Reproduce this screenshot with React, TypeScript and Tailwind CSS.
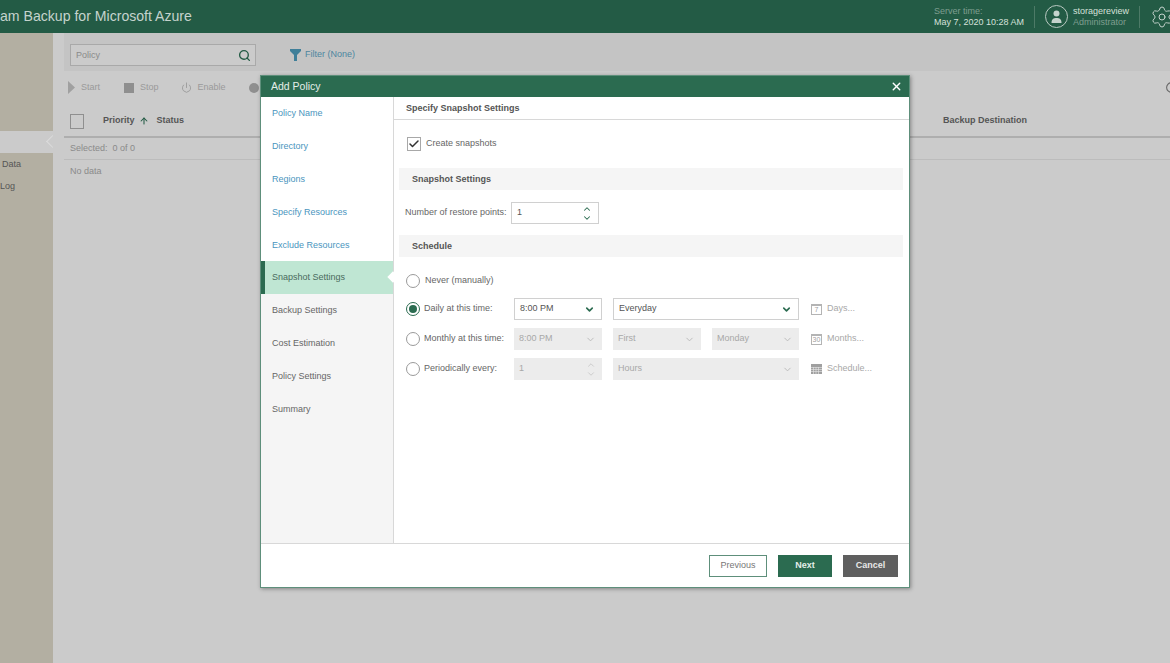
import React from "react";
import { Search, Power, Check, ChevronDown, ChevronUp, X, Settings, ArrowUp, RotateCw } from "lucide-react";

const navItems = ["Policy Name", "Directory", "Regions", "Specify Resources", "Exclude Resources", "Snapshot Settings", "Backup Settings", "Cost Estimation", "Policy Settings", "Summary"];

function Radio({ on }: { on?: boolean }) {
  return (
    <span className={`flex h-[14px] w-[14px] shrink-0 items-center justify-center rounded-full border bg-white ${on ? "border-[#2b6b50]" : "border-[#9a9a9a]"}`}>
      {on && <span className="h-[8px] w-[8px] rounded-full bg-[#2b6b50]" />}
    </span>
  );
}

function Sel({ w, text, off, spin }: { w: string; text: string; off?: boolean; spin?: boolean }) {
  return (
    <div className={`flex h-[22px] items-center justify-between pl-[5px] pr-[6px] ${w} ${off ? "bg-[#ececec] text-[#a8a8a8]" : "border border-[#d0d0d0] bg-white text-[#555]"}`}>
      <span>{text}</span>
      {spin ? (
        <span className={`flex flex-col ${off ? "text-[#b8b8b8]" : "text-[#2b6b50]"}`}>
          <ChevronUp size={10} strokeWidth={off ? 1.5 : 2.5} className="-mb-[1px]" />
          <ChevronDown size={10} strokeWidth={off ? 1.5 : 2.5} />
        </span>
      ) : (
        <ChevronDown size={11} strokeWidth={off ? 2 : 3.5} className={off ? "text-[#b8b8b8]" : "text-[#2b6b50]"} />
      )}
    </div>
  );
}

function Cal({ label, n, grid }: { label: string; n?: string; grid?: boolean }) {
  return (
    <div className="ml-[12px] flex items-center text-[#a8a8a8]">
      {grid ? (
        <svg width="11" height="10" viewBox="0 0 11 10" className="mr-[5px]">
          <rect width="11" height="10" fill="#a0a0a0" />
          <path d="M0 3.5h11M0 5.5h11M0 7.5h11M2.5 3v7M5 3v7M7.5 3v7" stroke="#e8e8e8" strokeWidth="0.6" />
        </svg>
      ) : (
        <span className="mr-[5px] flex h-[11px] w-[11px] items-center justify-center border border-t-2 border-[#b4b4b4] text-[7px] leading-none text-[#a0a0a0]">{n}</span>
      )}
      <span>{label}</span>
    </div>
  );
}

function SectionBar({ title }: { title: string }) {
  return <div className="flex h-[22px] items-center bg-[#f5f5f5] pl-[13px] pt-[1px] font-bold text-[#555]">{title}</div>;
}

export default function App() {
  return (
    <div className="relative flex h-[663px] w-[1170px] flex-col overflow-hidden bg-[#cbcbcb] text-[9px] font-['Liberation_Sans',Arial,sans-serif]">
      <header className="flex h-[33px] shrink-0 items-center bg-[#235b45] text-[#c9d6d0]">
        <div className="flex-1 text-[14.1px] leading-none text-[#c5d3cd]">am Backup for Microsoft Azure</div>
        <div className="w-[100px] leading-[11px]">
          <div className="text-[#7f9e90]">Server time:</div>
          <div className="text-[#d5e0da]">May 7, 2020 10:28 AM</div>
        </div>
        <div className="h-[22px] w-px bg-[#4d7a67]" />
        <div className="ml-[10px] flex h-[23px] w-[23px] items-center justify-center rounded-full border border-[#b9c9c2]">
          <svg width="13" height="13" viewBox="0 0 13 13" fill="#c5d3cd">
            <circle cx="6.5" cy="3.5" r="3" />
            <path d="M1.5 13c0-4 2-5 5-5s5 1 5 5z" />
          </svg>
        </div>
        <div className="ml-[5px] w-[66px] leading-[11px]">
          <div className="text-[#d5e0da]">storagereview</div>
          <div className="text-[#7f9e90]">Administrator</div>
        </div>
        <div className="h-[22px] w-px bg-[#4d7a67]" />
        <Settings size={24} strokeWidth={1} className="ml-[10px] mr-[-4px] shrink-0 text-[#c5d3cd]" />
      </header>

      <div className="flex flex-1">
        <aside className="flex w-[53px] shrink-0 flex-col bg-[#b3afa2] text-[#555]">
          <div className="relative mt-[98px] h-[22px] bg-[#cbcbcb]">
            <span className="absolute right-[-4px] top-[6px] h-[9px] w-[9px] rotate-45 border-b border-l border-[#dcdcdc] bg-[#cbcbcb]" />
          </div>
          <div className="flex h-[22px] items-center pl-[2px] pt-[2px]">Data</div>
          <div className="flex h-[22px] items-center pt-[2px]">Log</div>
        </aside>

        <main className="flex-1 pl-[11px] text-[#8a8a8a]">
          <div className="flex h-[38px] items-center bg-[#c4c4c4] pl-[6px] pt-[6px]">
            <div className="flex h-[22px] w-[186px] items-center justify-between border border-[#a9a9a9] bg-[#cbcbcb] pl-[5px] pr-[4px] pt-[1px]">
              <span>Policy</span>
              <Search size={13} strokeWidth={2.5} className="text-[#235b45]" />
            </div>
            <svg width="11" height="12" viewBox="0 0 11 12" fill="#3f7f99" className="ml-[34px]">
              <path d="M0 0h11v2L7 6v6H4V6L0 2z" />
            </svg>
            <span className="ml-[4px] text-[#4d86a0]">Filter (None)</span>
          </div>

          <div className="flex h-[33px] items-center pl-[4px] text-[#9a9a9a]">
            <svg width="7" height="13" viewBox="0 0 7 13" fill="#a0a0a0"><path d="M0 0l7 6.5L0 13z" /></svg>
            <span className="ml-[6px]">Start</span>
            <span className="ml-[24px] h-[10px] w-[10px] bg-[#8f8f8f]" />
            <span className="ml-[6px]">Stop</span>
            <Power size={11} className="ml-[22px]" />
            <span className="ml-[6px]">Enable</span>
            <span className="ml-[23px] h-[10px] w-[10px] rounded-full bg-[#8f8f8f]" />
            <div className="flex-1" />
            <RotateCw size={13} className="mr-[-8px] text-[#666]" />
          </div>

          <div className="flex h-[34px] items-center border-b-2 border-[#aeaeae] pl-[6px] pt-[2px] font-bold text-[#555]">
            <span className="h-[15px] w-[14px] border border-[#8f8f8f]" />
            <span className="ml-[19px]">Priority</span>
            <ArrowUp size={10} strokeWidth={2.5} className="ml-[4px] text-[#235b45]" />
            <span className="ml-[8px]">Status</span>
            <span className="ml-[759px]">Backup Destination</span>
          </div>
          <div className="flex h-[22px] items-center border-b border-[#bcbcbc] pl-[6px] pt-[1px]">Selected:&nbsp; 0 of 0</div>
          <div className="flex h-[22px] items-center pl-[6px] pt-[1px]">No data</div>
        </main>
      </div>

      {/* Dialog */}
      <div className="absolute left-[260px] top-[75px] flex h-[513px] w-[650px] flex-col border border-[#5e8f7b] bg-white shadow-[1px_1px_4px_rgba(0,0,0,0.35)]">
        <div className="flex h-[21px] shrink-0 items-center justify-between bg-[#2b6b50] pl-[10px] pr-[6px] text-[10.5px] text-[#e4eee9]">
          <span>Add Policy</span>
          <X size={13} strokeWidth={2.5} className="text-white" />
        </div>
        <div className="flex min-h-0 flex-1">
          <nav className="flex w-[133px] shrink-0 flex-col border-r border-[#d8d8d8] bg-[#f5f5f5]">
            {navItems.map((t, i) => (
              <div
                key={t}
                className={`relative flex h-[32.8px] items-center pt-[1.5px] ${i === 5 ? "border-l-4 border-[#2b6b50] bg-[#bfe6d3] pl-[7px] text-[#4a6b5d]" : i < 5 ? "bg-white pl-[11px] text-[#4a95be]" : "pl-[11px] text-[#666]"}`}
              >
                {t}
                {i === 5 && <span className="absolute right-[-4px] top-[12px] h-[8px] w-[8px] rotate-45 bg-white" />}
              </div>
            ))}
            <div className="flex-1" />
          </nav>
          <section className="flex min-w-0 flex-1 flex-col text-[#666]">
            <div className="flex h-[23px] shrink-0 items-center border-b border-[#d8d8d8] pl-[12px] pt-[1px] font-bold text-[#555]">Specify Snapshot Settings</div>
            <div className="flex flex-1 flex-col pl-[5px] pr-[6px]">
              <div className="mt-[17px] flex items-center pl-[8px]">
                <span className="flex h-[14px] w-[14px] items-center justify-center border border-[#a8a8a8]">
                  <Check size={12} strokeWidth={3} className="text-[#333]" />
                </span>
                <span className="ml-[5px]">Create snapshots</span>
              </div>
              <div className="mt-[17px]"><SectionBar title="Snapshot Settings" /></div>
              <div className="mt-[12px] flex items-center pl-[6px]">
                <span className="w-[106px] whitespace-nowrap">Number of restore points:</span>
                <Sel w="w-[88px]" text="1" spin />
              </div>
              <div className="mt-[11px]"><SectionBar title="Schedule" /></div>
              <div className="mt-[17px] flex h-[14px] items-center pl-[7px]">
                <Radio />
                <span className="ml-[5px]">Never (manually)</span>
              </div>
              <div className="mt-[10px] flex items-center pl-[7px]">
                <Radio on />
                <span className="ml-[4px] w-[90px] whitespace-nowrap">Daily at this time:</span>
                <Sel w="w-[88px]" text="8:00 PM" />
                <div className="w-[11px]" />
                <Sel w="w-[186px]" text="Everyday" />
                <Cal label="Days..." n="7" />
              </div>
              <div className="mt-[8px] flex items-center pl-[7px]">
                <Radio />
                <span className="ml-[4px] w-[90px] whitespace-nowrap">Monthly at this time:</span>
                <Sel w="w-[88px]" text="8:00 PM" off />
                <div className="w-[11px]" />
                <Sel w="w-[88px]" text="First" off />
                <div className="w-[11px]" />
                <Sel w="w-[87px]" text="Monday" off />
                <Cal label="Months..." n="30" />
              </div>
              <div className="mt-[8px] flex items-center pl-[7px]">
                <Radio />
                <span className="ml-[4px] w-[90px] whitespace-nowrap">Periodically every:</span>
                <Sel w="w-[88px]" text="1" off spin />
                <div className="w-[11px]" />
                <Sel w="w-[186px]" text="Hours" off />
                <Cal label="Schedule..." grid />
              </div>
            </div>
          </section>
        </div>
        <footer className="flex h-[44px] shrink-0 items-center justify-end gap-[11px] border-t border-[#d8d8d8] pr-[11px] font-bold">
          <button className="h-[22px] w-[58px] border border-[#5e8f7b] bg-white font-normal text-[#777]">Previous</button>
          <button className="h-[22px] w-[54px] bg-[#2b6b50] text-[#e4eee9]">Next</button>
          <button className="h-[22px] w-[55px] bg-[#5f5f5f] text-[#e8e8e8]">Cancel</button>
        </footer>
      </div>
    </div>
  );
}
